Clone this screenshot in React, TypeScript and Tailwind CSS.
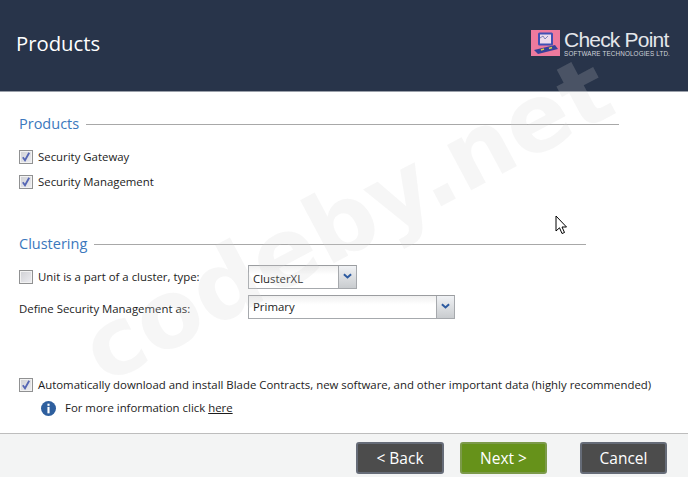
import React from "react";

const font = { fontFamily: '"Open Sans", "Noto Sans", sans-serif' };

function Check({ checked }: { checked?: boolean }) {
  return (
    <span className="relative block w-[14px] h-[14px] shrink-0 border border-[#909192] bg-gradient-to-br from-[#cfd0d4] to-[#eeeef2] shadow-[inset_0_0_0_1px_#f2f2f2]">
      {checked && (
        <svg viewBox="0 0 12 12" className="absolute left-0 top-0 w-3 h-3">
          <path d="M2.8 6.2 L5 9.3 L9.2 1.8" fill="none" stroke="#5566b4" strokeWidth="1.8" />
        </svg>
      )}
    </span>
  );
}

function SectionTitle({ title, width }: { title: string; width: string }) {
  return (
    <div className={`flex items-center gap-[7px] h-5 ${width}`}>
      <span className="text-[14.5px] text-[#3b78bd] leading-5">{title}</span>
      <span className="flex-1 h-px bg-[#a8a8a8]" />
    </div>
  );
}

function Combo({ value, width, low }: { value: string; width: string; low?: boolean }) {
  return (
    <div className={`flex h-6 border border-[#a6a9ad] border-t-[#9b9da0] bg-white ${width}`}>
      <span className={`flex-1 px-[4px] text-[11.4px] leading-[22px] text-[#1c1c1c] bg-gradient-to-b from-[#f0f0f0] to-white to-40% ${low ? "pt-[2px]" : ""}`}>{value}</span>
      <span className="w-[18px] border-l border-[#a6a9ad] bg-gradient-to-b from-[#f0f2f5] to-[#c9cccf] flex justify-center pt-[7px]">
        <svg viewBox="0 0 10 6" className="w-[9px] h-[6px]">
          <path d="M1 1 L5 4.6 L9 1" fill="none" stroke="#2c5aa0" strokeWidth="2.2" />
        </svg>
      </span>
    </div>
  );
}

function Btn({ label, green, w }: { label: string; green?: boolean; w: string }) {
  return (
    <button className={`${w} h-[32px] rounded-[3px] border-2 pt-[2px] text-[15.5px] text-white ${green ? "bg-[#66921a] border-[#7c9a4a]" : "bg-[#4c4c4c] border-[#666c78]"}`}>
      {label}
    </button>
  );
}

export default function App() {
  return (
    <div className="relative w-[688px] h-[477px] overflow-hidden flex flex-col bg-white text-[11.4px] text-[#1c1c1c]" style={font}>
      <header className="h-[92px] shrink-0 bg-[#28344a] flex items-center justify-between pl-4 pr-[18px] border-b border-[#9aa0aa]">
        <h1 className="text-[20.3px] text-white leading-none -mt-[5px]">Products</h1>
        <div className="flex items-start gap-[4px] mt-[-5px]">
          <svg viewBox="0 0 29 26" className="w-[29px] h-[26px]">
            <rect width="29" height="26" fill="#ee7a9e" />
            <rect x="7" y="2.5" width="15" height="13" rx="1.5" fill="#4050b4" />
            <rect x="9" y="4.5" width="11" height="9" fill="#ecdcec" />
            <path d="M9 8 l3 -2 l2 3 l3 -3" stroke="#5560a0" strokeWidth="0.7" fill="none" />
            <path d="M3 20 L24 15 L27 19 L7 24 Z" fill="#36429a" />
            <path d="M10 20 l3 -1 M18 18.5 l3 -1" stroke="#d8d04a" strokeWidth="1.5" />
          </svg>
          <div className="flex flex-col">
            <span className="text-[21px] leading-[20px] text-[#e4e6ea] tracking-[-0.8px] whitespace-nowrap" style={{ fontFamily: '"Liberation Sans", sans-serif' }}>Check Point</span>
            <span className="text-[6.3px] leading-[7px] text-[#cfd3da] tracking-[0.15px] whitespace-nowrap" style={{ fontFamily: '"Liberation Sans", sans-serif' }}>SOFTWARE TECHNOLOGIES LTD.</span>
          </div>
        </div>
      </header>

      <main className="h-[341px] shrink-0 px-[19px] pt-[22px] flex flex-col">
        <SectionTitle title="Products" width="w-[600px]" />
        <label className="flex items-center gap-[5px] mt-[15px] h-[16px]"><Check checked />Security Gateway</label>
        <label className="flex items-center gap-[5px] mt-[9px] h-[16px]"><Check checked />Security Management</label>

        <div className="mt-[44px]"><SectionTitle title="Clustering" width="w-[567px]" /></div>

        <div className="flex items-center mt-[11px] h-6">
          <label className="flex items-center gap-[5px] w-[229px]"><Check />Unit is a part of a cluster, type:</label>
          <Combo value="ClusterXL" width="w-[109px]" low />
        </div>
        <div className="flex items-center mt-[6px] h-6">
          <span className="w-[229px] pt-[3px]">Define Security Management as:</span>
          <Combo value="Primary" width="w-[207px]" />
        </div>

        <label className="flex items-center gap-[5px] mt-[58px] h-[16px] whitespace-nowrap"><Check checked />Automatically download and install Blade Contracts, new software, and other important data (highly recommended)</label>
        <div className="flex items-center gap-[9px] mt-[7px] ml-[22px] h-[16px]">
          <svg viewBox="0 0 14 14" className="w-[15px] h-[15px]">
            <circle cx="7" cy="7" r="7" fill="#2e5f9e" />
            <rect x="6" y="2.5" width="2" height="2" fill="#fff" />
            <rect x="6" y="5.5" width="2" height="6" fill="#fff" />
          </svg>
          <span>For more information click <a className="underline">here</a></span>
        </div>
      </main>

      <footer className="flex-1 bg-[#f3f4f4] border-t border-[#bdbdbd] flex items-start pt-[8px] pl-[356px]">
        <Btn label="< Back" w="w-[88px]" />
        <span className="ml-4"><Btn label="Next >" green w="w-[87px]" /></span>
        <span className="ml-[33px]"><Btn label="Cancel" w="w-[87px]" /></span>
      </footer>

      <div
        className="absolute left-[47px] top-[173px] w-[600px] text-center text-[94px] leading-none font-bold whitespace-nowrap pointer-events-none text-[#d4d4d4]/20 -rotate-[28deg]"
        style={{ fontFamily: '"DejaVu Sans", sans-serif' }}
      >
        codeby.net
      </div>

      <svg viewBox="0 0 13 21" className="absolute left-[555px] top-[215px] w-[13px] h-[21px] pointer-events-none">
        <path d="M1 1 L1 16 L4.5 12.8 L7 18.5 L9.5 17.5 L7 12 L11.5 12 Z" fill="#fff" stroke="#000" strokeWidth="1" />
      </svg>
    </div>
  );
}
